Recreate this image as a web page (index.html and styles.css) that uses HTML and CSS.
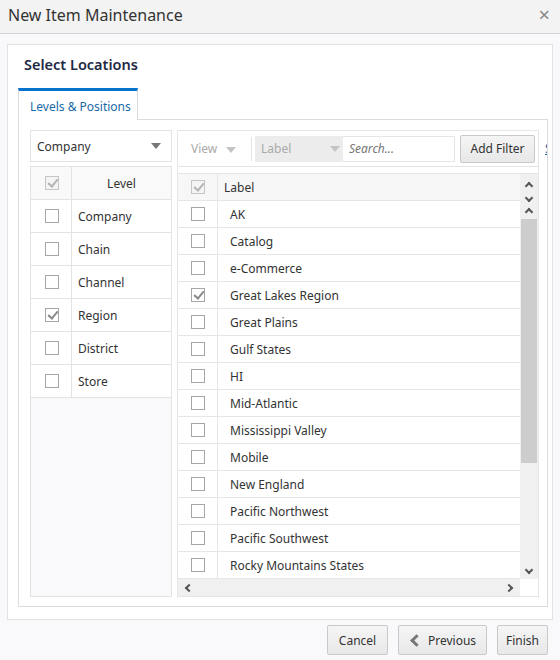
FILE: index.html
```html
<!DOCTYPE html>
<html lang="en">
<head>
    <meta charset="UTF-8">
    <title>New Item Maintenance</title>
    <link rel="stylesheet" href="styles.css">
</head>
<body>
    <div class="titlebar">
        <span class="title">New Item Maintenance</span>
        <span class="close">&times;</span>
    </div>

    <div class="content">
        <div class="card">
            <h2>Select Locations</h2>

            <div class="tabs">
                <div class="tab active">Levels &amp; Positions</div>
            </div>

            <div class="tab-panel">
                <!-- left: levels -->
                <div class="levels">
                    <div class="select">
                        <span>Company</span>
                        <span class="caret"></span>
                    </div>
                    <div class="level-table">
                        <div class="level-row head">
                            <div class="cb-cell"><span class="cb checked dim"></span></div>
                            <div class="name-cell center">Level</div>
                        </div>
                        <div class="level-row">
                            <div class="cb-cell"><span class="cb"></span></div>
                            <div class="name-cell">Company</div>
                        </div>
                        <div class="level-row">
                            <div class="cb-cell"><span class="cb"></span></div>
                            <div class="name-cell">Chain</div>
                        </div>
                        <div class="level-row">
                            <div class="cb-cell"><span class="cb"></span></div>
                            <div class="name-cell">Channel</div>
                        </div>
                        <div class="level-row">
                            <div class="cb-cell"><span class="cb checked"></span></div>
                            <div class="name-cell">Region</div>
                        </div>
                        <div class="level-row">
                            <div class="cb-cell"><span class="cb"></span></div>
                            <div class="name-cell">District</div>
                        </div>
                        <div class="level-row">
                            <div class="cb-cell"><span class="cb"></span></div>
                            <div class="name-cell">Store</div>
                        </div>
                        <div class="level-fill"></div>
                    </div>
                </div>

                <!-- right: positions -->
                <div class="positions">
                    <div class="toolbar">
                        <span class="view">View <span class="caret light"></span></span>
                        <span class="sep"></span>
                        <span class="label-select">Label <span class="caret light"></span></span>
                        <span class="search">Search...</span>
                        <button class="btn add">Add Filter</button>
                        <span class="more">S</span>
                    </div>

                    <div class="grid">
                        <div class="grid-head">
                            <div class="cb-col"><span class="cb checked dim"></span></div>
                            <div class="label-col">Label</div>
                            <div class="scroll-cap">
                                <span class="arrow up"></span>
                                <span class="arrow down"></span>
                            </div>
                        </div>
                        <div class="grid-body">
                            <div class="rows" id="rows"></div>
                            <div class="vscroll">
                                <span class="arrow up"></span>
                                <div class="thumb"></div>
                                <div class="track"></div>
                                <span class="arrow down"></span>
                            </div>
                        </div>
                        <div class="hscroll">
                            <span class="arrow left"></span>
                            <span class="arrow right"></span>
                        </div>
                    </div>
                </div>
            </div>
        </div>
    </div>

    <div class="footer">
        <button class="btn cancel">Cancel</button>
        <button class="btn prev"><span class="chev"></span>Previous</button>
        <button class="btn finish">Finish</button>
    </div>

    <script>
        const locations = [
            'AK', 'Catalog', 'e-Commerce', 'Great Lakes Region', 'Great Plains',
            'Gulf States', 'HI', 'Mid-Atlantic', 'Mississippi Valley', 'Mobile',
            'New England', 'Pacific Northwest', 'Pacific Southwest', 'Rocky Mountains States'
        ];
        const checked = ['Great Lakes Region'];

        const rows = document.getElementById('rows');
        locations.forEach(name => {
            const row = document.createElement('div');
            row.className = 'row';
            const box = checked.includes(name) ? 'cb checked' : 'cb';
            row.innerHTML = `
                <div class="cb-col"><span class="${box}"></span></div>
                <div class="label-col">${name}</div>
            `;
            rows.appendChild(row);
        });
    </script>
</body>
</html>
```

FILE: styles.css
```css
* {
    margin: 0;
    padding: 0;
    box-sizing: border-box;
}

body {
    background: #f9f9fb;
    font-family: "Noto Sans", "Open Sans", sans-serif;
    font-size: 12px;
    color: #333;
    width: 560px;
    height: 660px;
    overflow: hidden;
}

.titlebar {
    height: 34px;
    background: #f3f3f3;
    border-bottom: 1px solid #d4d4d4;
    display: flex;
    align-items: center;
    justify-content: space-between;
    padding: 0 8px 4px 8px;
}

.title {
    font-size: 16px;
    color: #333;
}

.close {
    font-size: 20px;
    color: #888;
    margin-right: 2px;
}

.content {
    padding: 10px 7px 0 7px;
}

.card {
    background: #fff;
    border: 1px solid #e2e2e2;
    height: 576px;
    padding: 0 4px 0 10px;
}

h2 {
    font-size: 14.5px;
    font-weight: 600;
    color: #1e2a44;
    padding: 9px 0 0 6px;
    height: 43px;
}

.tabs {
    display: flex;
}

.tab {
    width: 120px;
    height: 32px;
    border-top: 3px solid #0572ce;
    border-left: 1px solid #dcdcdc;
    border-right: 1px solid #dcdcdc;
    color: #1a6aa8;
    padding: 7px 0 0 11px;
    background: #fff;
    margin-bottom: -1px;
    position: relative;
    z-index: 1;
}

.tab-panel {
    border: 1px solid #dcdcdc;
    height: 488px;
    padding: 10px 9px 0 11px;
    display: flex;
    gap: 5px;
    overflow: hidden;
}

/* left column */
.levels {
    width: 142px;
    flex-shrink: 0;
    display: flex;
    flex-direction: column;
    gap: 4px;
}

.select {
    height: 32px;
    border: 1px solid #e3e3e3;
    display: flex;
    align-items: center;
    justify-content: space-between;
    padding: 0 10px 0 6px;
}

.caret {
    width: 0;
    height: 0;
    border-left: 5px solid transparent;
    border-right: 5px solid transparent;
    border-top: 6px solid #777;
    display: inline-block;
}

.caret.light {
    border-top-color: #c4c4c4;
    vertical-align: middle;
    margin-left: 6px;
}

.level-table {
    border: 1px solid #e3e3e3;
    height: 431px;
    display: flex;
    flex-direction: column;
}

.level-row {
    height: 33px;
    display: flex;
    border-bottom: 1px solid #e3e3e3;
    background: #fff;
}

.level-row.head {
    background: #f9f9f9;
}

.cb-cell {
    width: 41px;
    border-right: 1px solid #e3e3e3;
    display: flex;
    align-items: center;
    justify-content: center;
    padding-left: 1px;
}

.name-cell {
    flex: 1;
    display: flex;
    align-items: center;
    padding-left: 6px;
}

.name-cell.center {
    justify-content: center;
    padding-left: 0;
}

.level-fill {
    flex: 1;
    background: #f9f9fb;
}

.cb {
    width: 14px;
    height: 14px;
    border: 1px solid #a6a6a6;
    background: #fff;
    display: inline-block;
    position: relative;
}

.cb.checked::after {
    content: "";
    position: absolute;
    left: 4px;
    top: 0px;
    width: 4px;
    height: 8px;
    border-right: 2px solid #8a8a8a;
    border-bottom: 2px solid #8a8a8a;
    transform: rotate(40deg);
}

.cb.dim {
    border-color: #c6c6c6;
    background: #f4f4f4;
}

.cb.dim::after {
    border-color: #b4b4b4;
}

/* right column */
.positions {
    width: 362px;
    flex-shrink: 0;
    border: 1px solid #e6e6e6;
    border-bottom: none;
    display: flex;
    flex-direction: column;
    height: 468px;
}

.toolbar {
    height: 36px;
    border-bottom: 1px solid #e3e3e3;
    display: flex;
    align-items: center;
    padding-left: 13px;
    white-space: nowrap;
}

.toolbar > * {
    flex-shrink: 0;
}

.view {
    color: #a9a9a9;
    width: 60px;
}

.sep {
    width: 1px;
    height: 24px;
    background: #e3e3e3;
    margin-right: 3px;
}

.label-select {
    background: #ececec;
    color: #a9a9a9;
    width: 88px;
    height: 26px;
    display: flex;
    align-items: center;
    justify-content: space-between;
    padding: 0 3px 0 6px;
}

.search {
    width: 112px;
    height: 26px;
    border: 1px solid #e6e6e6;
    border-left: none;
    display: flex;
    align-items: center;
    padding-left: 6px;
    font-style: italic;
    color: #777;
}

.btn {
    font-family: inherit;
    font-size: 12px;
    color: #333;
    background: linear-gradient(#f5f5f5, #e8e8e8);
    border: 1px solid #c9c9c9;
    border-radius: 2px;
    height: 30px;
    padding: 0 10px;
}

.btn.add {
    margin-left: 5px;
    height: 28px;
    width: 75px;
    padding: 0;
}

.more {
    color: #1a6aa8;
    margin-left: 10px;
    text-decoration: underline;
}

.grid {
    margin-top: 6px;
    display: flex;
    flex-direction: column;
    border-bottom: 1px solid #e6e6e6;
}

.grid-head {
    height: 28px;
    display: flex;
    background: #f7f7f7;
    border-top: 1px solid #e6e6e6;
}

.cb-col {
    width: 40px;
    flex-shrink: 0;
    border-right: 1px solid #e6e6e6;
    display: flex;
    align-items: center;
    justify-content: center;
}

.label-col {
    flex: 1;
    display: flex;
    align-items: center;
    padding-left: 12px;
    white-space: nowrap;
}

.grid-head .label-col {
    padding-left: 6px;
    border-bottom: 1px solid #e6e6e6;
}

.grid-head .cb-col {
    border-bottom: 1px solid #e6e6e6;
}

.scroll-cap {
    width: 18px;
    background: #f0f0f0;
    display: flex;
    flex-direction: column;
    align-items: center;
    justify-content: space-between;
    padding: 7px 0 0;
}

.grid-body {
    display: flex;
    height: 378px;
}

.rows {
    flex: 1;
}

.row {
    height: 27px;
    display: flex;
    border-bottom: 1px solid #e6e6e6;
}

.vscroll {
    width: 18px;
    background: #f0f0f0;
    display: flex;
    flex-direction: column;
    align-items: center;
}

.vscroll .arrow.up {
    margin-top: 8px;
}

.thumb {
    width: 16px;
    height: 244px;
    background: #cdcdcd;
    margin-top: 4px;
}

.track {
    flex: 1;
}

.hscroll {
    height: 17px;
    width: 342px;
    background: #f0f0f0;
    display: flex;
    align-items: center;
    justify-content: space-between;
    padding: 0 8px;
}

.arrow {
    width: 6px;
    height: 6px;
    border-left: 2px solid #555;
    border-top: 2px solid #555;
    display: block;
}

.arrow.up {
    transform: rotate(45deg);
    margin-top: 2px;
}

.arrow.down {
    transform: rotate(225deg);
    margin-bottom: 6px;
}

.scroll-cap .arrow.down {
    margin-bottom: 0;
}

.arrow.left {
    transform: rotate(-45deg);
}

.arrow.right {
    transform: rotate(135deg);
}

/* footer */
.footer {
    display: flex;
    justify-content: flex-end;
    gap: 10px;
    padding: 5px 12px 0 0;
}

.btn.cancel {
    width: 61px;
}

.btn.finish {
    width: 51px;
    padding: 0;
}

.btn.prev {
    width: 89px;
    display: flex;
    align-items: center;
    gap: 7px;
    padding: 0 0 0 13px;
}

.chev {
    width: 9px;
    height: 9px;
    border-left: 3px solid #777;
    border-bottom: 3px solid #777;
    transform: rotate(45deg);
    display: inline-block;
}
```
